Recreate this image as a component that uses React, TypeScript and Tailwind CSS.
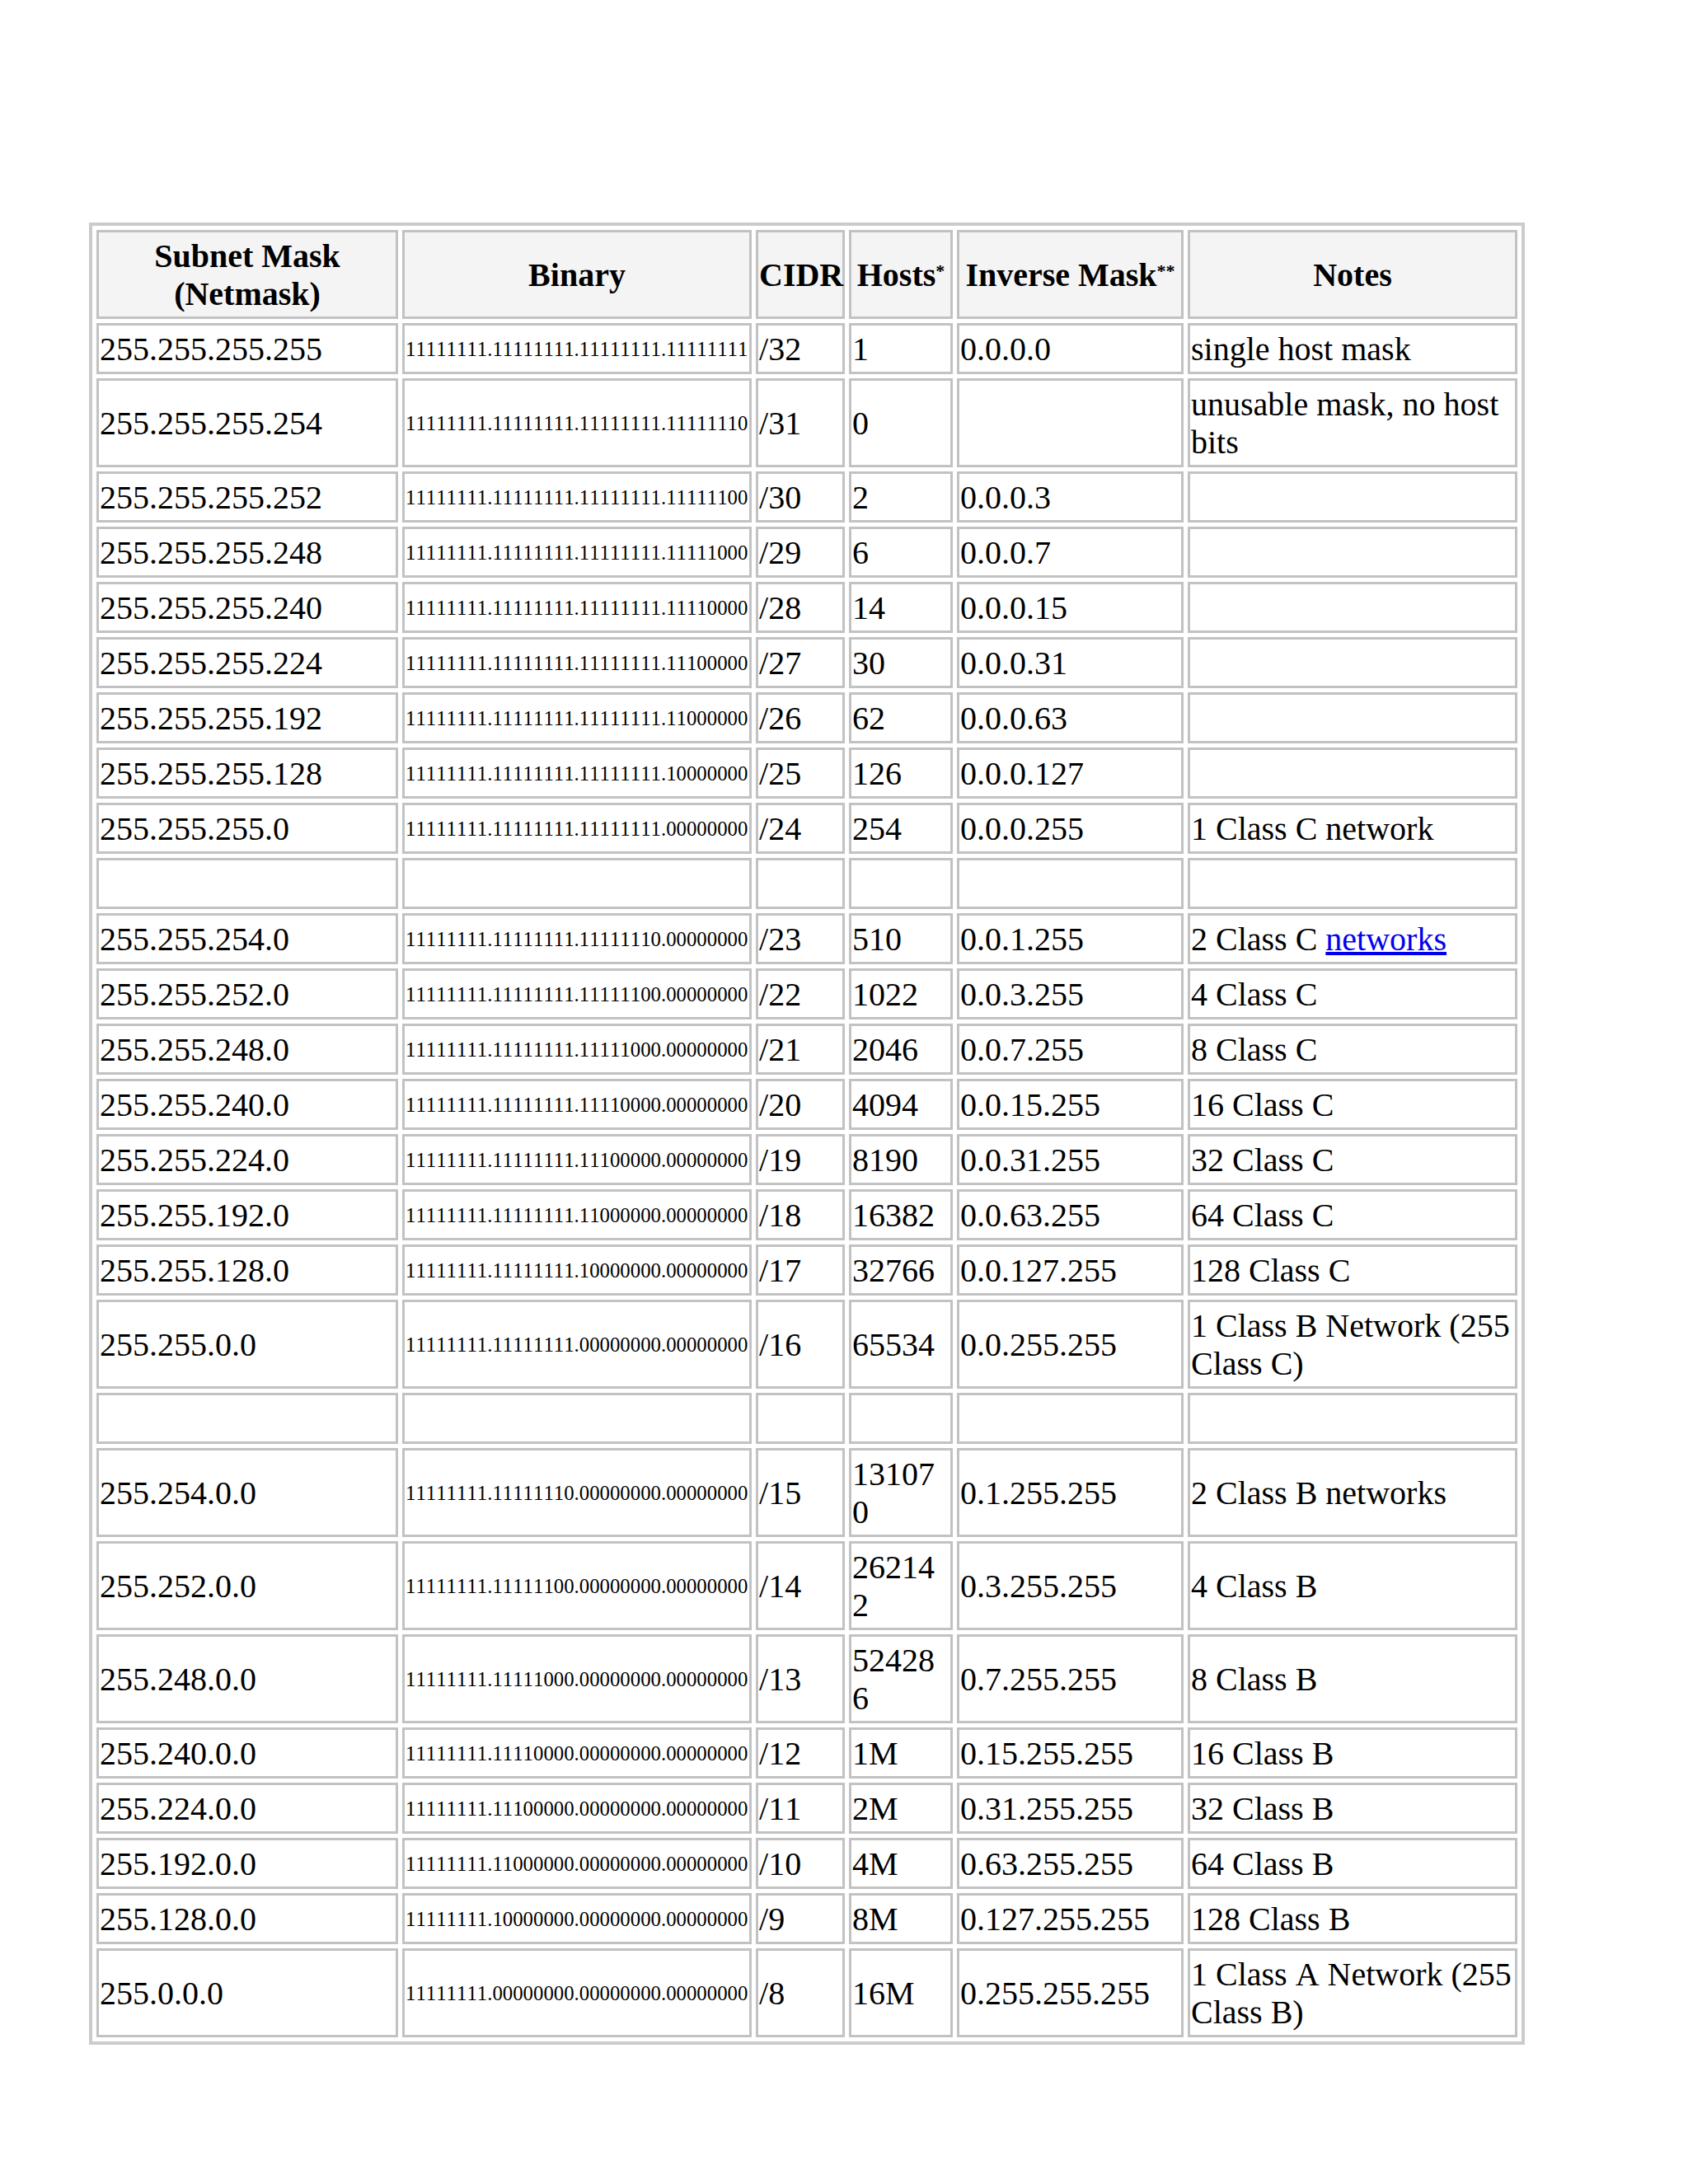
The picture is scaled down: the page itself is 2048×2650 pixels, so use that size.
type Row = {
  mask: string;
  cidr: number;
  hosts: string;
  inverse: string;
  notes?: React.ReactNode;
};

const rows: (Row | null)[] = [
  { mask: '255.255.255.255', cidr: 32, hosts: '1', inverse: '0.0.0.0', notes: 'single host mask' },
  { mask: '255.255.255.254', cidr: 31, hosts: '0', inverse: '', notes: 'unusable mask, no host bits' },
  { mask: '255.255.255.252', cidr: 30, hosts: '2', inverse: '0.0.0.3' },
  { mask: '255.255.255.248', cidr: 29, hosts: '6', inverse: '0.0.0.7' },
  { mask: '255.255.255.240', cidr: 28, hosts: '14', inverse: '0.0.0.15' },
  { mask: '255.255.255.224', cidr: 27, hosts: '30', inverse: '0.0.0.31' },
  { mask: '255.255.255.192', cidr: 26, hosts: '62', inverse: '0.0.0.63' },
  { mask: '255.255.255.128', cidr: 25, hosts: '126', inverse: '0.0.0.127' },
  { mask: '255.255.255.0', cidr: 24, hosts: '254', inverse: '0.0.0.255', notes: '1 Class C network' },
  null,
  {
    mask: '255.255.254.0',
    cidr: 23,
    hosts: '510',
    inverse: '0.0.1.255',
    notes: (
      <>
        2 Class C{' '}
        <a href="#" className="text-[#0000ee] underline">
          networks
        </a>
      </>
    ),
  },
  { mask: '255.255.252.0', cidr: 22, hosts: '1022', inverse: '0.0.3.255', notes: '4 Class C' },
  { mask: '255.255.248.0', cidr: 21, hosts: '2046', inverse: '0.0.7.255', notes: '8 Class C' },
  { mask: '255.255.240.0', cidr: 20, hosts: '4094', inverse: '0.0.15.255', notes: '16 Class C' },
  { mask: '255.255.224.0', cidr: 19, hosts: '8190', inverse: '0.0.31.255', notes: '32 Class C' },
  { mask: '255.255.192.0', cidr: 18, hosts: '16382', inverse: '0.0.63.255', notes: '64 Class C' },
  { mask: '255.255.128.0', cidr: 17, hosts: '32766', inverse: '0.0.127.255', notes: '128 Class C' },
  { mask: '255.255.0.0', cidr: 16, hosts: '65534', inverse: '0.0.255.255', notes: '1 Class B Network (255 Class C)' },
  null,
  { mask: '255.254.0.0', cidr: 15, hosts: '131070', inverse: '0.1.255.255', notes: '2 Class B networks' },
  { mask: '255.252.0.0', cidr: 14, hosts: '262142', inverse: '0.3.255.255', notes: '4 Class B' },
  { mask: '255.248.0.0', cidr: 13, hosts: '524286', inverse: '0.7.255.255', notes: '8 Class B' },
  { mask: '255.240.0.0', cidr: 12, hosts: '1M', inverse: '0.15.255.255', notes: '16 Class B' },
  { mask: '255.224.0.0', cidr: 11, hosts: '2M', inverse: '0.31.255.255', notes: '32 Class B' },
  { mask: '255.192.0.0', cidr: 10, hosts: '4M', inverse: '0.63.255.255', notes: '64 Class B' },
  { mask: '255.128.0.0', cidr: 9, hosts: '8M', inverse: '0.127.255.255', notes: '128 Class B' },
  { mask: '255.0.0.0', cidr: 8, hosts: '16M', inverse: '0.255.255.255', notes: '1 Class A Network (255 Class B)' },
];

// dotted binary form of a prefix length
function binary(prefix: number) {
  const bits = '1'.repeat(prefix) + '0'.repeat(32 - prefix);
  return [0, 8, 16, 24].map((i) => bits.slice(i, i + 8)).join('.');
}

const cell = 'border-[3px] border-[#c2c2c2] bg-white px-[1px] pt-[6px] pb-[4px] text-left align-middle';
const head = 'border-[3px] border-[#c2c2c2] bg-[#f4f4f4] px-[1px] pt-[6px] pb-[4px] text-center align-middle font-bold';

export default function App() {
  return (
    <div className="min-h-[2650px] bg-white pl-[108px] pt-[270px] font-['Liberation_Serif','Times_New_Roman',serif] text-[40px] leading-[46px] text-black [font-kerning:none]">
      <table className="table-fixed border-separate border-spacing-[5px] border-4 border-[#cbcbcb] w-[1742px]">
        <thead>
          <tr>
            <th className={`${head} w-[366px]`}>
              Subnet Mask
              <br />
              (Netmask)
            </th>
            <th className={`${head} w-[424px]`}>Binary</th>
            <th className={`${head} w-[108px] whitespace-nowrap`}>CIDR</th>
            <th className={`${head} w-[126px] whitespace-nowrap`}>
              Hosts<sup className="text-[22px] font-bold">*</sup>
            </th>
            <th className={`${head} w-[275px] whitespace-nowrap`}>
              Inverse Mask<sup className="text-[22px] font-bold">**</sup>
            </th>
            <th className={`${head} w-[400px]`}>Notes</th>
          </tr>
        </thead>
        <tbody>
          {rows.map((r, i) =>
            r ? (
              <tr key={i}>
                <td className={cell}>{r.mask}</td>
                <td className={`${cell} whitespace-nowrap text-[24.8px]`}>{binary(r.cidr)}</td>
                <td className={cell}>/{r.cidr}</td>
                <td className={`${cell} break-all`}>{r.hosts}</td>
                <td className={cell}>{r.inverse}</td>
                <td className={cell}>{r.notes}</td>
              </tr>
            ) : (
              <tr key={i}>
                <td className={cell}>&nbsp;</td>
                <td className={cell}>&nbsp;</td>
                <td className={cell}>&nbsp;</td>
                <td className={cell}>&nbsp;</td>
                <td className={cell}>&nbsp;</td>
                <td className={cell}>&nbsp;</td>
              </tr>
            )
          )}
        </tbody>
      </table>
    </div>
  );
}
